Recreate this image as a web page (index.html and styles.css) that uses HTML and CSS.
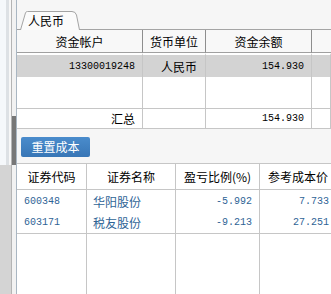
FILE: index.html
```html
<!DOCTYPE html>
<html lang="zh-CN">
<head>
  <meta charset="UTF-8">
  <title>资金与持仓</title>
  <link rel="stylesheet" href="styles.css">
</head>
<body>
  <div class="page">
    <!-- left splitter -->
    <div class="side">
      <div class="pane">
        <div class="pane-top"></div>
        <div class="pane-bottom"></div>
      </div>
      <div class="track"><div class="thumb"></div></div>
    </div>

    <div class="main">
      <div class="tabbar">
        <div class="tab">
          <svg class="tab-shape" width="60" height="19" viewBox="0 0 60 19">
            <path d="M0.5 19 L5.5 1.8 Q6 0.5 7.5 0.5 L52 0.5 Q55.5 0.5 56.5 4 L59.5 19" fill="#fbfbfb" stroke="#a4a4a4"/>
          </svg>
          <span class="tab-label">人民币</span>
        </div>
      </div>

      <table class="grid fund">
        <colgroup><col style="width:126px"><col style="width:63px"><col style="width:106px"><col></colgroup>
        <thead>
          <tr><th>资金帐户</th><th>货币单位</th><th>资金余额</th><th></th></tr>
        </thead>
        <tbody>
          <tr class="selected"><td class="num">13300019248</td><td class="r">人民币</td><td class="num">154.930</td><td></td></tr>
          <tr class="blank"><td></td><td></td><td></td><td></td></tr>
          <tr class="total"><td class="r">汇总</td><td></td><td class="num">154.930</td><td></td></tr>
        </tbody>
      </table>

      <div class="toolbar">
        <button class="btn">重置成本</button>
      </div>

      <div class="stock-wrap">
        <table class="grid stock">
          <colgroup><col style="width:70px"><col style="width:89px"><col style="width:84px"><col style="width:77px"></colgroup>
          <thead>
            <tr><th>证券代码</th><th>证券名称</th><th>盈亏比例(%)</th><th>参考成本价</th></tr>
          </thead>
          <tbody>
            <tr><td class="code">600348</td><td class="name">华阳股份</td><td class="num">-5.992</td><td class="num">7.733</td></tr>
            <tr><td class="code">603171</td><td class="name">税友股份</td><td class="num">-9.213</td><td class="num">27.251</td></tr>
            <tr class="filler"><td></td><td></td><td></td><td></td></tr>
          </tbody>
        </table>
      </div>
    </div>
  </div>
</body>
</html>
```

FILE: styles.css
```css
* { box-sizing: border-box; }
html, body {
  margin: 0;
  height: 100%;
  overflow: hidden;
}
body {
  font-family: "Noto Sans CJK SC", "Liberation Sans", sans-serif;
  font-size: 12px;
  color: #000;
  background: #f6f6f6;
}
.page {
  display: flex;
  height: 294px;
}

/* splitter on the left */
.side {
  display: flex;
  width: 17px;
  flex: none;
}
.pane {
  width: 12px;
  display: flex;
  flex-direction: column;
  border-right: 1px solid #b4b4b4;
}
.pane-top {
  height: 165px;
  background: #f5f8fb;
  border-right: 2px solid #f7f7f7;
  box-shadow: inset -3px 0 0 #dde1e5;
}
.pane-bottom {
  flex: 1;
  background: #d4d4d4;
}
.track {
  width: 5px;
  padding-top: 116px;
  background: #f2f2f2;
  border-right: 1px solid #a9b6c2;
}
.thumb {
  width: 4px;
  height: 49px;
  background: #777;
}

.main {
  flex: 1;
  min-width: 0;
  overflow: hidden;
}

/* currency tab */
.tabbar {
  height: 30px;
  padding: 11px 0 0 3px;
  border-bottom: 1px solid #a4a4a4;
  background: #f6f6f6;
}
.tab {
  position: relative;
  width: 60px;
  height: 19px;
}
.tab-shape {
  position: absolute;
  left: 0;
  top: 0;
}
.tab-label {
  position: relative;
  display: block;
  padding-left: 8px;
  line-height: 19px;
}

/* grids */
.grid {
  border-collapse: separate;
  border-spacing: 0;
  table-layout: fixed;
  background: #fff;
}
.grid th {
  font-weight: normal;
  padding: 0;
  text-align: center;
  white-space: nowrap;
  overflow: hidden;
}
.grid td {
  padding: 0 7px;
  white-space: nowrap;
  overflow: hidden;
  border-right: 1px solid #c6c6c6;
}
.num {
  font-family: "Liberation Mono", "DejaVu Sans Mono", monospace;
  font-size: 10px;
  text-align: right;
}
.r { text-align: right; }

.fund { width: 314px; }
.fund th {
  height: 23px;
  background: #f8f8f8;
  border-right: 1px solid #8e8e8e;
  border-bottom: 1px solid #a0a0a0;
}
.fund th:last-child { border-right: none; }
.fund td:nth-child(2) { padding-right: 8px; }
.fund .selected td {
  height: 24px;
  background: #d3d3d3;
  border-top: 2px solid #fff;
}
.fund .blank td {
  height: 32px;
  border-bottom: 1px solid #c6c6c6;
}
.fund .total td {
  height: 20px;
  border-bottom: 1px solid #c6c6c6;
}

.toolbar {
  height: 34px;
  padding: 8px 0 0 4px;
  background: #f6f6f6;
}
.btn {
  display: block;
  width: 69px;
  height: 20px;
  padding: 0;
  border: none;
  border-radius: 2px;
  background: linear-gradient(#4a8ccc, #3876b6);
  color: #fff;
  font-family: inherit;
  font-size: 12px;
  line-height: 20px;
}

.stock-wrap {
  overflow: hidden;
  height: 131px;
  background: #fff;
}
.stock { width: 320px; }
.stock th {
  height: 27px;
  border-top: 1px solid #c6c6c6;
  border-right: 1px solid #c6c6c6;
  border-bottom: 1px solid #c6c6c6;
}
.stock td {
  height: 22px;
  color: #2f6496;
}
.stock tbody tr:nth-child(2) td { border-bottom: 1px solid #c6c6c6; }
.stock .code {
  font-family: "Liberation Mono", "DejaVu Sans Mono", monospace;
  font-size: 10px;
}
.stock .name { padding-left: 6px; }
.stock .filler td { height: 70px; }
```
